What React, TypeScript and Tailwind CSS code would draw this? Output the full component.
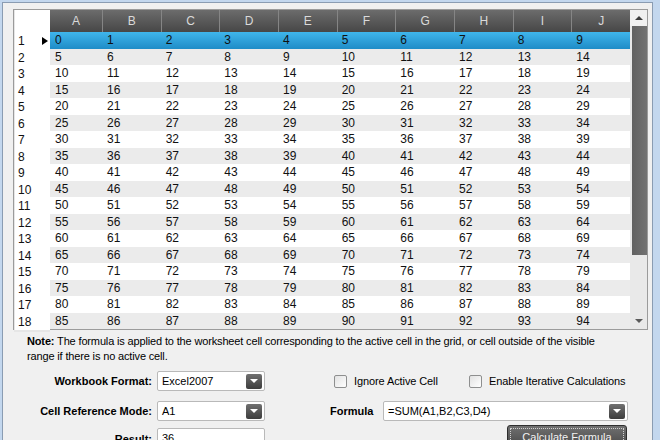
import React from 'react'

const cols = ['A', 'B', 'C', 'D', 'E', 'F', 'G', 'H', 'I', 'J']
const rows = Array.from({ length: 18 }, (_, i) => i)

const gridCols = 'grid grid-cols-[36px_52px_repeat(9,minmax(0,1fr))]'

function Caret() {
  return <span className="w-0 h-0 border-x-[4px] border-x-transparent border-t-[4px] border-t-white" />
}

function Combo({ value, className }: { value: string; className: string }) {
  return (
    <div
      className={`h-[20px] flex items-center justify-between bg-white border border-[#b9b9b9] rounded-[2px] pl-[4px] pr-[2px] ${className}`}
    >
      <span>{value}</span>
      <span className="w-[16px] h-[15px] rounded-[2px] bg-linear-to-b from-[#707070] to-[#3d3d3d] flex items-center justify-center">
        <Caret />
      </span>
    </div>
  )
}

function Check({ label }: { label: string }) {
  return (
    <div className="flex items-center gap-[7px]">
      <span className="w-[13px] h-[13px] border border-[#8e8f8f] rounded-[2px] bg-linear-to-br from-[#e2e2e2] to-white" />
      <span className="tracking-[-0.1px]">{label}</span>
    </div>
  )
}

function Scrollbar() {
  return (
    <div className="w-[17px] flex flex-col bg-[#e9e9e9]">
      <div className="h-[16px] bg-[#f0f0f0] flex items-center justify-center">
        <span className="w-0 h-0 border-x-[4px] border-x-transparent border-b-[4px] border-b-[#3c3c3c]" />
      </div>
      <div className="h-[229px] ml-[2px] bg-linear-to-r from-[#616161] to-[#727272]" />
      <div className="flex-1" />
      <div className="h-[16px] flex items-center justify-center">
        <span className="w-0 h-0 border-x-[4px] border-x-transparent border-t-[4px] border-t-[#5a5a5a]" />
      </div>
    </div>
  )
}

function Grid() {
  return (
    <div className="w-[635px] h-[321px] border border-[#9b9b9b] bg-white flex text-[12px] text-[#111]">
      <div className="flex-1 flex flex-col">
        <div className={`${gridCols} h-[22px]`}>
          <div className="bg-white border-l border-[#e6e6e6]" />
          {cols.map((c, i) => (
            <div
              key={c}
              className={`flex items-center justify-center text-[#dadada] bg-linear-to-b from-[#6c6c6c] to-[#474747] ${
                i > 0 ? 'border-l border-l-[#858585]' : ''
              }`}
            >
              {c}
            </div>
          ))}
        </div>
        {rows.map((r) => {
          const rowBg =
            r === 0
              ? 'bg-linear-to-b from-[#3fb6ec] to-[#1e8cc7]'
              : r % 2 === 1
                ? 'bg-[#ebebeb]'
                : 'bg-white'
          return (
            <div key={r} className={`${gridCols} h-[16.5px] ${rowBg}`}>
              <div className="bg-white border-l border-b-2 border-[#e6e6e6] pl-[3px] pr-[2px] pt-[1px] leading-[16.5px] flex items-start justify-between">
                <span>{r + 1}</span>
                {r === 0 && (
                  <span className="mt-[4px] w-0 h-0 border-y-[4.5px] border-y-transparent border-l-[6px] border-l-black" />
                )}
              </div>
              {cols.map((c, i) => (
                <div key={c} className="pl-[5px] leading-[16.5px]">
                  {r * 5 + i}
                </div>
              ))}
            </div>
          )
        })}
      </div>
      <Scrollbar />
    </div>
  )
}

export default function App() {
  return (
    <div className="w-[660px] h-[440px] overflow-hidden bg-[#c3d7ee] pl-[2px] pt-[2px] pr-[7px] font-['Liberation_Sans',Arial,sans-serif]">
      <div className="h-full border-l border-t border-r border-[#8a9cb2] bg-[#f0f0f0] pl-[10px] pt-[6px] pr-[4px]">
        <Grid />
        <div className="pl-[14px] text-[11px] text-black">
          <p className="mt-[4px] leading-[15px] whitespace-nowrap tracking-[-0.15px]">
            <b>Note:</b> The formula is applied to the worksheet cell corresponding to the active cell in the grid, or cell outside of the visible
            <br />
            range if there is no active cell.
          </p>

          <div className="mt-[7px] h-[20px] flex items-center">
            <span className="w-[125px] text-right font-bold">Workbook Format:</span>
            <Combo value="Excel2007" className="ml-[5px] w-[108px]" />
            <div className="ml-[69px] w-[135px]">
              <Check label="Ignore Active Cell" />
            </div>
            <Check label="Enable Iterative Calculations" />
          </div>

          <div className="mt-[10px] h-[20px] flex items-center">
            <span className="w-[125px] text-right font-bold">Cell Reference Mode:</span>
            <Combo value="A1" className="ml-[5px] w-[108px]" />
            <span className="ml-[65px] w-[53px] font-bold">Formula</span>
            <Combo value="=SUM(A1,B2,C3,D4)" className="w-[245px]" />
          </div>

          <div className="mt-[4px] flex items-start">
            <span className="w-[125px] text-right font-bold mt-[6px]">Result:</span>
            <div className="ml-[5px] w-[108px] h-[20px] mt-[3px] bg-white border border-[#b9b9b9] rounded-[2px] pl-[4px] leading-[18px]">
              36
            </div>
            <button className="ml-[242px] w-[120px] h-[24px] rounded-[3px] border border-[#2e2e2e] bg-linear-to-b from-[#707070] to-[#474747] p-[2px]">
              <span className="flex h-full items-center justify-center border border-dotted border-[#d0d0d0] text-[#f2f2f2] text-[11px]">
                Calculate Formula
              </span>
            </button>
          </div>
        </div>
      </div>
    </div>
  )
}
